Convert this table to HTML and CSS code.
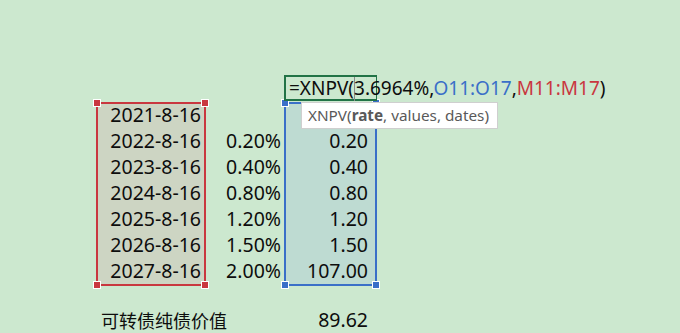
FILE: index.html
```html
<!DOCTYPE html>
<html lang="zh">
<head>
<meta charset="utf-8">
<link rel="stylesheet" href="styles.css">
</head>
<body>
<div class="sheet">
  <div class="grid">
    <div class="sel sel-red"><i class="h tl"></i><i class="h tr"></i><i class="h bl"></i><i class="h br"></i></div>
    <div class="sel sel-blue"><i class="h tl"></i><i class="h tr"></i><i class="h bl"></i><i class="h br"></i></div>

    <div class="formula-cell">
      <span class="formula">=XNPV(<span class="caret"></span>3.6964%,<span class="ref-blue">O11:O17</span>,<span class="ref-red">M11:M17</span>)</span>
      <div class="tip">XNPV(<b>rate</b>, values, dates)</div>
    </div>

    <div class="c c1 r2">2021-8-16</div>

    <div class="c c1 r3">2022-8-16</div>
    <div class="c c2 r3">0.20%</div>
    <div class="c c3 r3">0.20</div>

    <div class="c c1 r4">2023-8-16</div>
    <div class="c c2 r4">0.40%</div>
    <div class="c c3 r4">0.40</div>

    <div class="c c1 r5">2024-8-16</div>
    <div class="c c2 r5">0.80%</div>
    <div class="c c3 r5">0.80</div>

    <div class="c c1 r6">2025-8-16</div>
    <div class="c c2 r6">1.20%</div>
    <div class="c c3 r6">1.20</div>

    <div class="c c1 r7">2026-8-16</div>
    <div class="c c2 r7">1.50%</div>
    <div class="c c3 r7">1.50</div>

    <div class="c c1 r8">2027-8-16</div>
    <div class="c c2 r8">2.00%</div>
    <div class="c c3 r8">107.00</div>

    <div class="c c1 r10 label">可转债纯债价值</div>
    <div class="c c3 r10">89.62</div>
  </div>
</div>
</body>
</html>
```

FILE: styles.css
```css
html, body {
  margin: 0;
  padding: 0;
  background: #cce8cf;
}
body {
  width: 680px;
  height: 333px;
  overflow: hidden;
  font-family: "Noto Sans", "Noto Sans CJK SC", sans-serif;
  color: #0d0d0d;
}
.sheet {
  padding: 76px 0 0 96px;
}
.grid {
  display: grid;
  grid-template-columns: 110px 79px 92px;
  grid-template-rows: repeat(8, 26px) 23px 26px;
  font-size: 19.5px;
}
.c {
  position: relative;
  z-index: 1;
  display: flex;
  align-items: center;
  justify-content: flex-end;
  white-space: nowrap;
  line-height: 1;
}
.c1 { grid-column: 1; padding-right: 5px; }
.c2 { grid-column: 2; padding-right: 4px; }
.c3 { grid-column: 3; padding-right: 9px; }
.r2 { grid-row: 2; }
.r3 { grid-row: 3; }
.r4 { grid-row: 4; }
.r5 { grid-row: 5; }
.r6 { grid-row: 6; }
.r7 { grid-row: 7; }
.r8 { grid-row: 8; }
.r10 { grid-row: 10; }
.label {
  justify-content: flex-start;
  padding: 0 0 0 5px;
  font-family: "Noto Sans CJK SC", sans-serif;
  font-size: 18px;
}

.sel {
  grid-row: 2 / 9;
  position: relative;
  z-index: 0;
  border: 2px solid;
  margin-bottom: -2px;
}
.sel-red {
  grid-column: 1;
  border-color: #c9373f;
  background: #cdd5c3;
}
.sel-blue {
  grid-column: 3;
  border-color: #3a6fc8;
  background: #bedbd2;
  margin-left: -1px;
}
.h {
  position: absolute;
  width: 6px;
  height: 6px;
  border: 1px solid #fff;
}
.sel-red .h { background: #c9373f; }
.sel-blue .h { background: #3a6fc8; }
.h.tl { left: -5px; top: -5px; }
.h.tr { right: -5px; top: -5px; }
.h.bl { left: -5px; bottom: -5px; }
.h.br { right: -5px; bottom: -5px; }

.formula-cell {
  grid-column: 3;
  grid-row: 1;
  position: relative;
  z-index: 2;
  border: 2px solid #217346;
  border-right-width: 1px;
  margin: -1px 0 1px -1px;
  display: flex;
  align-items: center;
  white-space: nowrap;
  font-size: 19px;
  line-height: 1;
}
.formula {
  padding-left: 3px;
  position: relative;
  z-index: 2;
}
.caret {
  display: inline-block;
  width: 1px;
  height: 24px;
  background: #8a8a8a;
  vertical-align: middle;
  margin: -6px -1px -6px 0;
}
.ref-blue { color: #3a6fc8; }
.ref-red { color: #c9373f; }

.tip {
  position: absolute;
  left: 15px;
  top: 25px;
  z-index: 3;
  background: #fff;
  border: 1px solid #cfcfcf;
  color: #595959;
  font-size: 15.3px;
  padding: 4px 8px 5px 6px;
  line-height: 16px;
}
.tip b {
  font-weight: bold;
  color: #595959;
}
```
